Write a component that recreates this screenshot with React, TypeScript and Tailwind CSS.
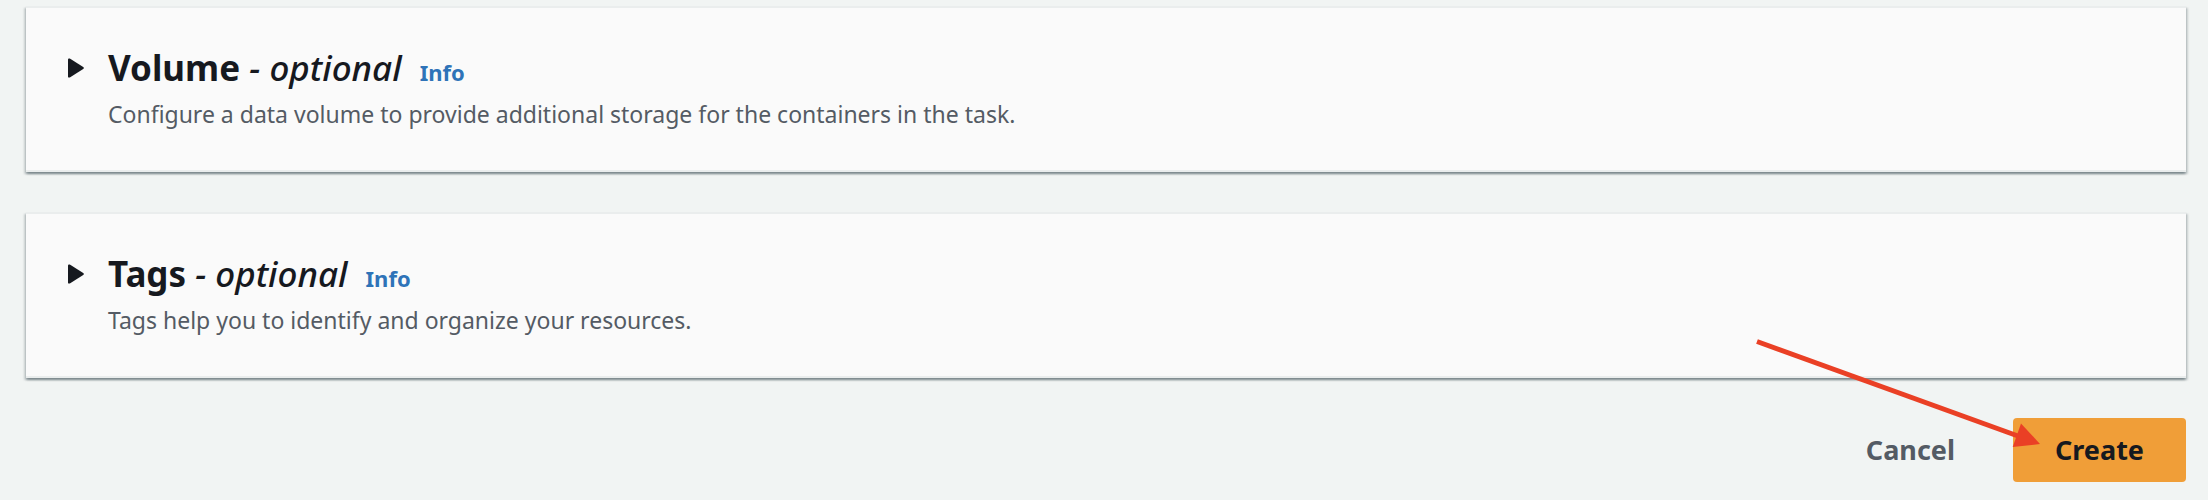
interface SectionProps {
  id: string;
  title: string;
  description: string;
}

function ExpandableSection({ id, title, description }: SectionProps) {
  return (
    <section
      aria-labelledby={id}
      className="flex items-start gap-6 border-y-2 border-[#eaeded] bg-[#fafafa] pt-[38px] pr-10 pb-9 pl-[42px] shadow-[0_2px_2px_0_rgba(0,28,36,0.3),2px_2px_2px_0_rgba(0,28,36,0.15),-2px_2px_2px_0_rgba(0,28,36,0.15)]"
    >
      <button
        type="button"
        aria-expanded="false"
        aria-labelledby={id}
        className="flex h-11 w-4 shrink-0 items-center text-[#16191f]"
      >
        <svg viewBox="0 0 16 20" className="h-5 w-4" fill="currentColor" aria-hidden="true">
          <path d="M0 1.6C0 .4 1.2.1 2.2.7L15.2 9.1C16.1 9.7 16.1 10.3 15.2 10.9L2.2 19.3C1.2 19.9 0 19.6 0 18.4Z" />
        </svg>
      </button>
      <div className="flex flex-col gap-1">
        <div className="flex items-baseline gap-[18px]">
          <h2 id={id} className="text-[35px] leading-[44px] font-bold text-[#16191f]">
            {title}
            <em className="font-medium"> - optional</em>
          </h2>
          <a href="#info" className="text-[22px] leading-[30px] font-bold text-[#2e73b8]">
            Info
          </a>
        </div>
        <p className="text-[23px] leading-10 text-[#545b64]">{description}</p>
      </div>
    </section>
  );
}

export default function App() {
  return (
    <main className="flex min-h-screen flex-col gap-10 bg-[#f1f4f3] pt-1.5 pr-[22px] pb-4 pl-[26px] font-['Noto_Sans',sans-serif]">
      <ExpandableSection
        id="volume"
        title="Volume"
        description="Configure a data volume to provide additional storage for the containers in the task."
      />
      <ExpandableSection
        id="tags"
        title="Tags"
        description="Tags help you to identify and organize your resources."
      />
      <div className="flex justify-end gap-4 text-[27px] leading-[64px] font-bold">
        <button type="button" className="px-[42px] text-[#545b64]">
          Cancel
        </button>
        <div className="relative">
          <button type="button" className="rounded bg-[#f09e38] px-[42px] text-[#16191f]">
            Create
          </button>
          <svg
            viewBox="0 0 290 112"
            className="pointer-events-none absolute -top-20 right-[142px] h-[112px] w-[290px]"
            aria-hidden="true"
          >
            <path d="M3 3.5L264 98" stroke="#ea4025" strokeWidth="5" fill="none" />
            <path d="M286 106L267 85.5L258.7 109Z" fill="#ea4025" />
          </svg>
        </div>
      </div>
    </main>
  );
}
